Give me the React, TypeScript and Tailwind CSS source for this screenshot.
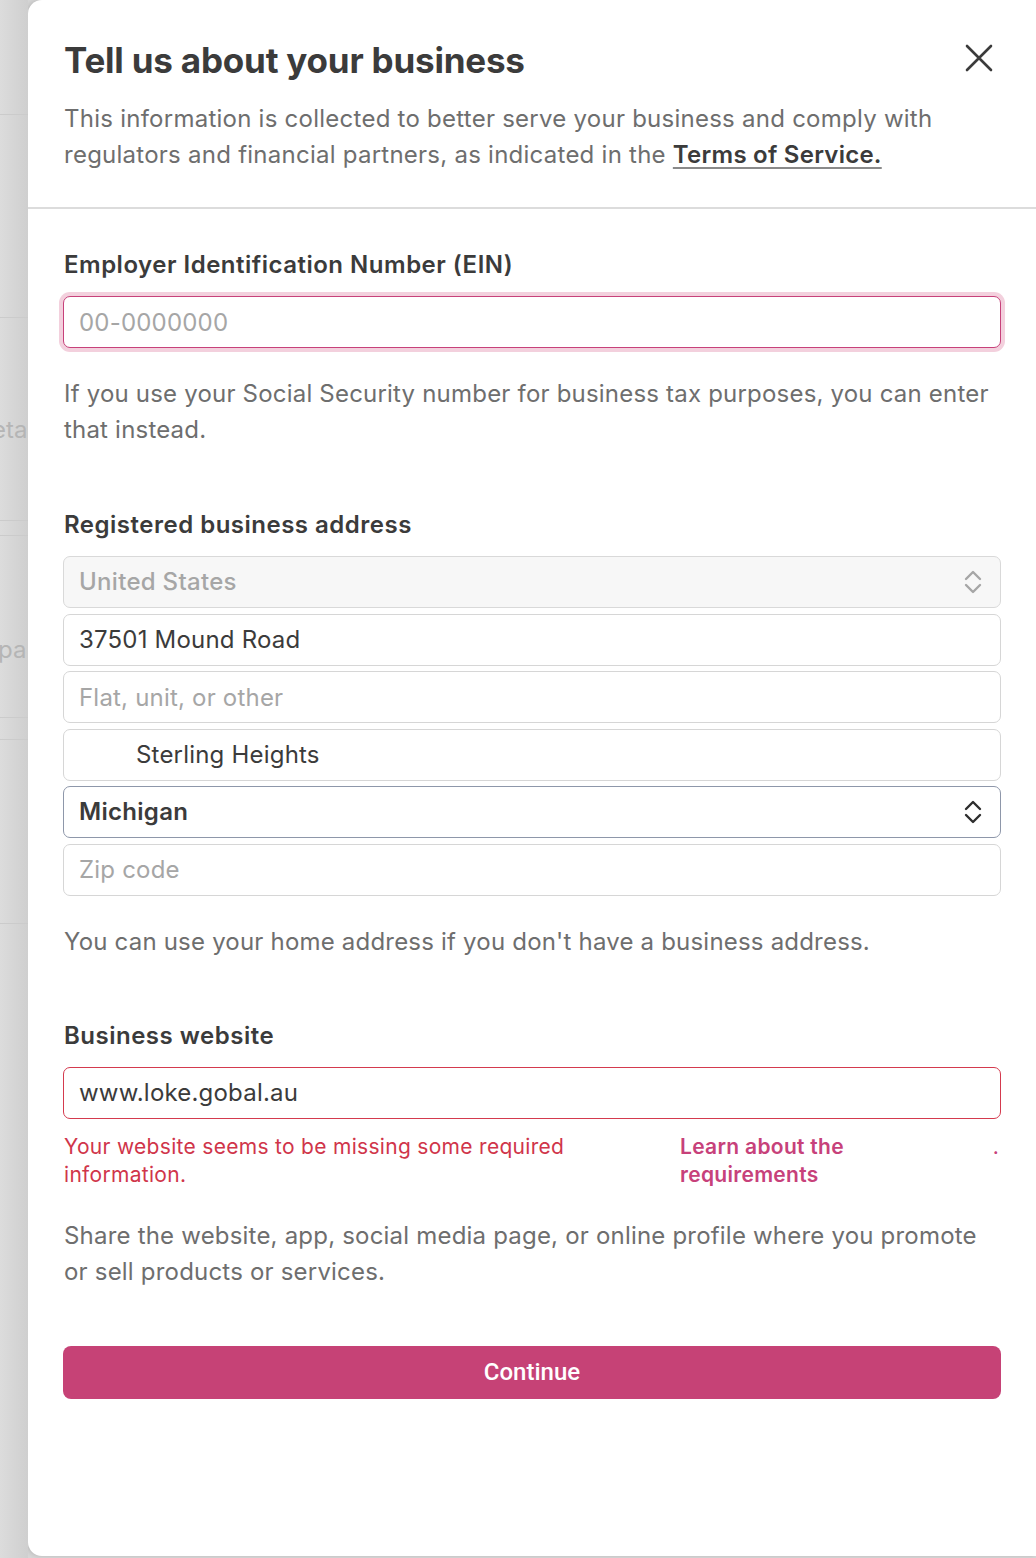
import React from "react"

const font = { fontFamily: "Inter, 'Noto Sans', sans-serif" }

const inputBase =
  "h-[52px] w-full rounded-[7px] border bg-white px-[15px] text-[24px] tracking-[0.2px] outline-none"

const ChevronUpDown = ({ color }: { color: string }) => (
  <svg width="22" height="30" viewBox="0 0 22 30" fill="none">
    <path d="M4 12 L11 5 L18 12" stroke={color} strokeWidth="2.4" strokeLinecap="round" strokeLinejoin="round" />
    <path d="M4 18 L11 25 L18 18" stroke={color} strokeWidth="2.4" strokeLinecap="round" strokeLinejoin="round" />
  </svg>
)

const BackdropStrip = () => (
  <div className="relative w-[28px] shrink-0 overflow-hidden bg-gradient-to-r from-[#dcdcdc] to-[#cfcfcf]">
    <div className="h-[115px] border-b border-[#cbcbcb]" />
    <div className="h-[203px] border-b border-[#cbcbcb]" />
    <div className="h-[203px] border-b border-[#cbcbcb] pt-[96px]">
      <span className="-ml-[8px] block text-[24px] leading-[32px] text-[#b5b5b5]">eta</span>
    </div>
    <div className="h-[15px] border-b border-[#cbcbcb]" />
    <div className="h-[182px] border-b border-[#cbcbcb] pt-[98px]">
      <span className="-ml-[2px] block text-[24px] leading-[32px] text-[#b5b5b5]">pa</span>
    </div>
    <div className="h-[22px] border-b border-[#cbcbcb]" />
    <div className="h-[184px] border-b border-[#cbcbcb]" />
  </div>
)

export default function App() {
  return (
    <div style={font} className="flex h-[1558px] w-[1036px] overflow-hidden bg-[#d6d6d6]">
      <BackdropStrip />
      <div className="mb-[2px] flex flex-1 flex-col rounded-l-[14px] bg-white shadow-[-2px_0_4px_rgba(0,0,0,0.12)]">
        <div className="border-b-2 border-[#dcdcdc] pb-[34px] pl-[36px] pr-[36px] pt-[38px]">
          <div className="flex items-start justify-between">
            <h1 className="text-[35px] font-bold leading-[44px] tracking-[-0.2px] text-[#3b3b3b]">
              Tell us about your business
            </h1>
            <button type="button" className="mr-[4px] mt-[3px] p-[2px]">
              <svg width="30" height="30" viewBox="0 0 30 30" fill="none">
                <path d="M3 3 L27 27 M27 3 L3 27" stroke="#3b3b3b" strokeWidth="2.6" strokeLinecap="round" />
              </svg>
            </button>
          </div>
          <p className="mt-[19px] text-[24px] leading-[36px] tracking-[0.25px] text-[#6e6e6e]">
            This information is collected to better serve your business and comply with
            regulators and financial partners, as indicated in the{" "}
            <a className="font-semibold text-[#3b3b3b] underline decoration-[#8a8a8a] decoration-2 underline-offset-[4px]">
              Terms of Service.
            </a>
          </p>
        </div>

        <div className="px-[35px] pt-[40px]">
          <label className="block">
            <span className="block pl-[1px] text-[24px] font-semibold leading-[32px] tracking-[0.5px] text-[#3b3b3b]">
              Employer Identification Number (EIN)
            </span>
            <input
              placeholder="00-0000000"
              className={`${inputBase} mt-[15px] border-[#c7417a] shadow-[0_0_0_4px_#f3d0dd] placeholder:text-[#a6a6a6]`}
            />
          </label>
          <p className="mt-[28px] pl-[1px] text-[24px] leading-[36px] tracking-[0.2px] text-[#6e6e6e]">
            If you use your Social Security number for business tax purposes, you can enter
            that instead.
          </p>

          <span className="mt-[61px] block pl-[1px] text-[24px] font-semibold leading-[32px] tracking-[0.5px] text-[#3b3b3b]">
            Registered business address
          </span>
          <div className="mt-[15px] flex flex-col gap-[5.6px]">
            <div className="flex h-[52px] items-center justify-between rounded-[7px] border border-[#d9d9d9] bg-[#f7f7f7] pl-[15px] pr-[16px]">
              <span className="text-[24px] font-medium tracking-[0.3px] text-[#a6a6a6]">United States</span>
              <ChevronUpDown color="#a6a6a6" />
            </div>
            <input defaultValue="37501 Mound Road" className={`${inputBase} border-[#d6d6d6] text-[#3b3b3b]`} />
            <input placeholder="Flat, unit, or other" className={`${inputBase} border-[#d6d6d6] placeholder:text-[#a6a6a6]`} />
            <input defaultValue="Sterling Heights" className={`${inputBase} border-[#d6d6d6] pl-[72px] text-[#3b3b3b]`} />
            <div className="flex h-[52px] items-center justify-between rounded-[7px] border-[1.5px] border-[#8e97aa] bg-white pl-[15px] pr-[16px]">
              <span className="text-[24px] font-semibold tracking-[0.3px] text-[#3b3b3b]">Michigan</span>
              <ChevronUpDown color="#2e2e2e" />
            </div>
            <input placeholder="Zip code" className={`${inputBase} border-[#d6d6d6] placeholder:text-[#a6a6a6]`} />
          </div>
          <p className="mt-[28px] pl-[1px] text-[24px] leading-[36px] tracking-[0.2px] text-[#6e6e6e]">
            You can use your home address if you don't have a business address.
          </p>

          <span className="mt-[60px] block pl-[1px] text-[24px] font-semibold leading-[32px] tracking-[0.5px] text-[#3b3b3b]">
            Business website
          </span>
          <input
            defaultValue="www.loke.gobal.au"
            className={`${inputBase} mt-[15px] border-[1.5px] border-[#d43a4e] text-[#3b3b3b]`}
          />
          <div className="mt-[14px] flex items-start pl-[1px] text-[21px] leading-[28px] tracking-[0.3px]">
            <p className="w-[580px] text-[#d0354a]">
              Your website seems to be missing some required information.
            </p>
            <a className="ml-[36px] w-[200px] font-semibold text-[#c7417a]">Learn about the requirements</a>
            <span className="ml-auto mr-[2px] text-[#c7417a]">.</span>
          </div>
          <p className="mt-[29px] pl-[1px] text-[24px] leading-[36px] tracking-[0.2px] text-[#6e6e6e]">
            Share the website, app, social media page, or online profile where you promote
            or sell products or services.
          </p>

          <button
            type="button"
            className="mt-[56px] h-[53px] w-full rounded-[8px] bg-[#c64276] text-[24px] font-medium text-white"
            style={{ fontFamily: "Roboto, Inter, sans-serif" }}
          >
            Continue
          </button>
        </div>
      </div>
    </div>
  )
}
